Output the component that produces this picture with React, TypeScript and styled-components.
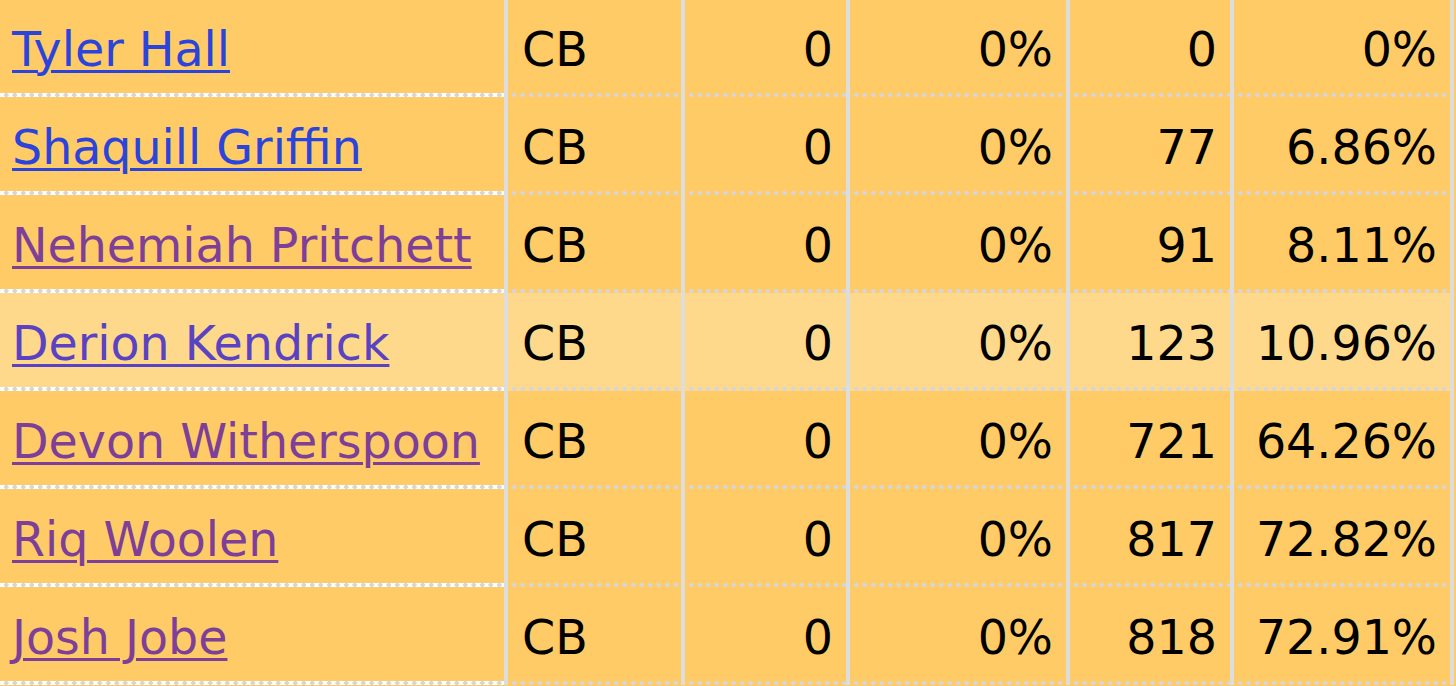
import React from 'react';
import styled, { createGlobalStyle } from 'styled-components';

const Global = createGlobalStyle`
  html, body { margin: 0; padding: 0; background: #fecb66; overflow: hidden; }
  body { width: 1456px; height: 686px; }
`;

const Table = styled.table`
  border-collapse: separate;
  border-spacing: 0;
  table-layout: fixed;
  width: 1454px;
  margin-top: -1px;
  font-family: "DejaVu Sans", Verdana, sans-serif;
  font-size: 47.5px;
  color: #000;
`;

const Col = styled.col<{ $w: number }>`
  width: ${(p) => p.$w}px;
`;

const Row = styled.tr<{ $hl?: boolean }>`
  height: 98px;
  background-color: ${(p) => (p.$hl ? '#fed98b' : '#fecb66')};
`;

const dots = 'radial-gradient(circle at 50% 50%, #d5d5dc 2.1px, transparent 2.5px)';

const Cell = styled.td<{ $right?: boolean }>`
  box-sizing: border-box;
  padding: 3px 13px 0 14px;
  text-align: ${(p) => (p.$right ? 'right' : 'left')};
  vertical-align: middle;
  border-right: 4px solid #dddddd;
  white-space: nowrap;
  line-height: 1;
  background-image: ${dots};
  background-repeat: repeat-x;
  background-position: 2px bottom;
  background-size: 8.5px 4.5px;
`;

const NameCell = styled(Cell)`
  padding-left: 12px;
  background-image: ${dots}, linear-gradient(#ffffff, #ffffff);
  background-repeat: repeat-x, no-repeat;
  background-position: 2px bottom, left bottom;
  background-size: 8.5px 4.5px, 100% 4px;
`;

const tones = {
  blue: '#2b44dc',
  purple: '#7d3f97',
  mid: '#5a43c2',
};

const Name = styled.a<{ $tone: keyof typeof tones }>`
  color: ${(p) => tones[p.$tone]};
  text-decoration: underline;
  text-decoration-thickness: 3px;
  text-underline-offset: 4px;
`;

type R = { name: string; tone: keyof typeof tones; a: string; b: string; c: string; d: string; hl?: boolean };

const rows: R[] = [
  { name: 'Tyler Hall', tone: 'blue', a: '0', b: '0%', c: '0', d: '0%' },
  { name: 'Shaquill Griffin', tone: 'blue', a: '0', b: '0%', c: '77', d: '6.86%' },
  { name: 'Nehemiah Pritchett', tone: 'purple', a: '0', b: '0%', c: '91', d: '8.11%' },
  { name: 'Derion Kendrick', tone: 'mid', a: '0', b: '0%', c: '123', d: '10.96%', hl: true },
  { name: 'Devon Witherspoon', tone: 'purple', a: '0', b: '0%', c: '721', d: '64.26%' },
  { name: 'Riq Woolen', tone: 'purple', a: '0', b: '0%', c: '817', d: '72.82%' },
  { name: 'Josh Jobe', tone: 'purple', a: '0', b: '0%', c: '818', d: '72.91%' },
];

const widths = [508, 177, 165, 220, 164, 220];

export default function App() {
  return (
    <>
      <Global />
      <Table>
        <colgroup>
          {widths.map((w, i) => (
            <Col key={i} $w={w} />
          ))}
        </colgroup>
        <tbody>
          {rows.map((r) => (
            <Row key={r.name} $hl={r.hl}>
              <NameCell>
                <Name href="#" $tone={r.tone}>{r.name}</Name>
              </NameCell>
              <Cell>CB</Cell>
              <Cell $right>{r.a}</Cell>
              <Cell $right>{r.b}</Cell>
              <Cell $right>{r.c}</Cell>
              <Cell $right>{r.d}</Cell>
            </Row>
          ))}
        </tbody>
      </Table>
    </>
  );
}
